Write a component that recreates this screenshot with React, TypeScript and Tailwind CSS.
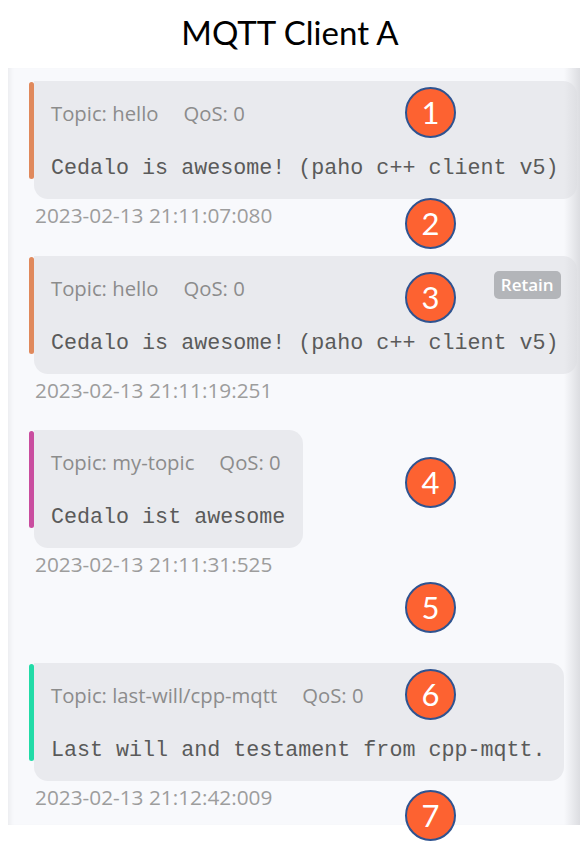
import React from "react";

type Msg = {
    topic: string,
    qos: number,
    payload: string,
    time: string,
    color: string,
    retain?: boolean,
    gapAfter?: string,
}

const messages: Msg[] = [
    { topic: "hello", qos: 0, payload: "Cedalo is awesome! (paho c++ client v5)", time: "2023-02-13 21:11:07:080", color: "bg-[#e0895c]", gapAfter: "mb-[27px]" },
    { topic: "hello", qos: 0, payload: "Cedalo is awesome! (paho c++ client v5)", time: "2023-02-13 21:11:19:251", color: "bg-[#e0895c]", retain: true, gapAfter: "mb-[26px]" },
    { topic: "my-topic", qos: 0, payload: "Cedalo ist awesome", time: "2023-02-13 21:11:31:525", color: "bg-[#c94d9f]", gapAfter: "mb-[85px]" },
    { topic: "last-will/cpp-mqtt", qos: 0, payload: "Last will and testament from cpp-mqtt.", time: "2023-02-13 21:12:42:009", color: "bg-[#22dba7]" },
];

// annotation markers laid over the screenshot
const markers = [
    { n: 1, top: "top-[87px]" },
    { n: 2, top: "top-[198px]" },
    { n: 3, top: "top-[272px]" },
    { n: 4, top: "top-[457px]" },
    { n: 5, top: "top-[582px]" },
    { n: 6, top: "top-[669px]" },
    { n: 7, top: "top-[790px]" },
];

const MessageItem = ({ m }: { m: Msg }) => (
    <div className={`flex flex-col items-start ${m.gapAfter ?? ""}`}>
        <div className="flex flex-row">
            <div className={`w-[5px] mt-[1px] mb-[20px] rounded-full ${m.color}`} />
            <div className="bg-[#e9eaee] rounded-r-[14px] rounded-bl-[14px] pl-[17px] pr-[18px] pt-[18px] pb-[15px]">
                <div className="flex flex-row justify-between h-[28px]">
                    <div className="flex flex-row text-[20.3px] text-[#8c8c8c] leading-[28px] gap-[25px] font-['Open_Sans',sans-serif]">
                        <span>Topic: {m.topic}</span>
                        <span>QoS: {m.qos}</span>
                    </div>
                    {m.retain && (
                        <span className="-mt-[3px] -mr-[2px] h-[28px] bg-[#b3b5b9] text-white text-[17px] font-semibold leading-[28px] px-[7px] rounded-[5px] font-['Open_Sans',sans-serif]">Retain</span>
                    )}
                </div>
                <div className="mt-[27px] h-[30px] leading-[30px] text-[21.7px] text-[#5a5a5a] whitespace-pre font-['Liberation_Mono',monospace]">
                    {m.payload}
                </div>
            </div>
        </div>
        <div className="ml-[6px] mt-[2px] text-[20.8px] leading-[28px] text-[#9d9d9d] font-['Open_Sans',sans-serif]">{m.time}</div>
    </div>
);

const App = () => {
    return (
        <div className="relative w-[580px] h-[861px] bg-white overflow-hidden">
            <div className="h-[68px] flex items-center justify-center pb-[2px] text-[33px] text-black font-['Lato',sans-serif]">
                MQTT Client A
            </div>

            <div className="relative ml-[8px] h-[757px] bg-[#f8f9fc] overflow-hidden shadow-[inset_5px_0_5px_-3px_rgba(0,0,0,0.06)]">
                <div className="flex flex-col pl-[21px] pt-[13px]">
                    {messages.map((m, i) => <MessageItem key={i} m={m} />)}
                </div>
                <div className="absolute top-0 right-0 h-full w-[16px] bg-gradient-to-r from-[#f8f9fc]/0 to-[#dcdde1]" />
            </div>

            {markers.map((k) => (
                <div key={k.n} className={`absolute left-[405px] ${k.top} w-[51px] h-[51px] rounded-full bg-[#fd6231] border-2 border-[#2f5390] flex items-center justify-center text-white text-[31px] leading-none font-['Lato',sans-serif]`}>
                    {k.n}
                </div>
            ))}
        </div>
    );
};

export default App;
